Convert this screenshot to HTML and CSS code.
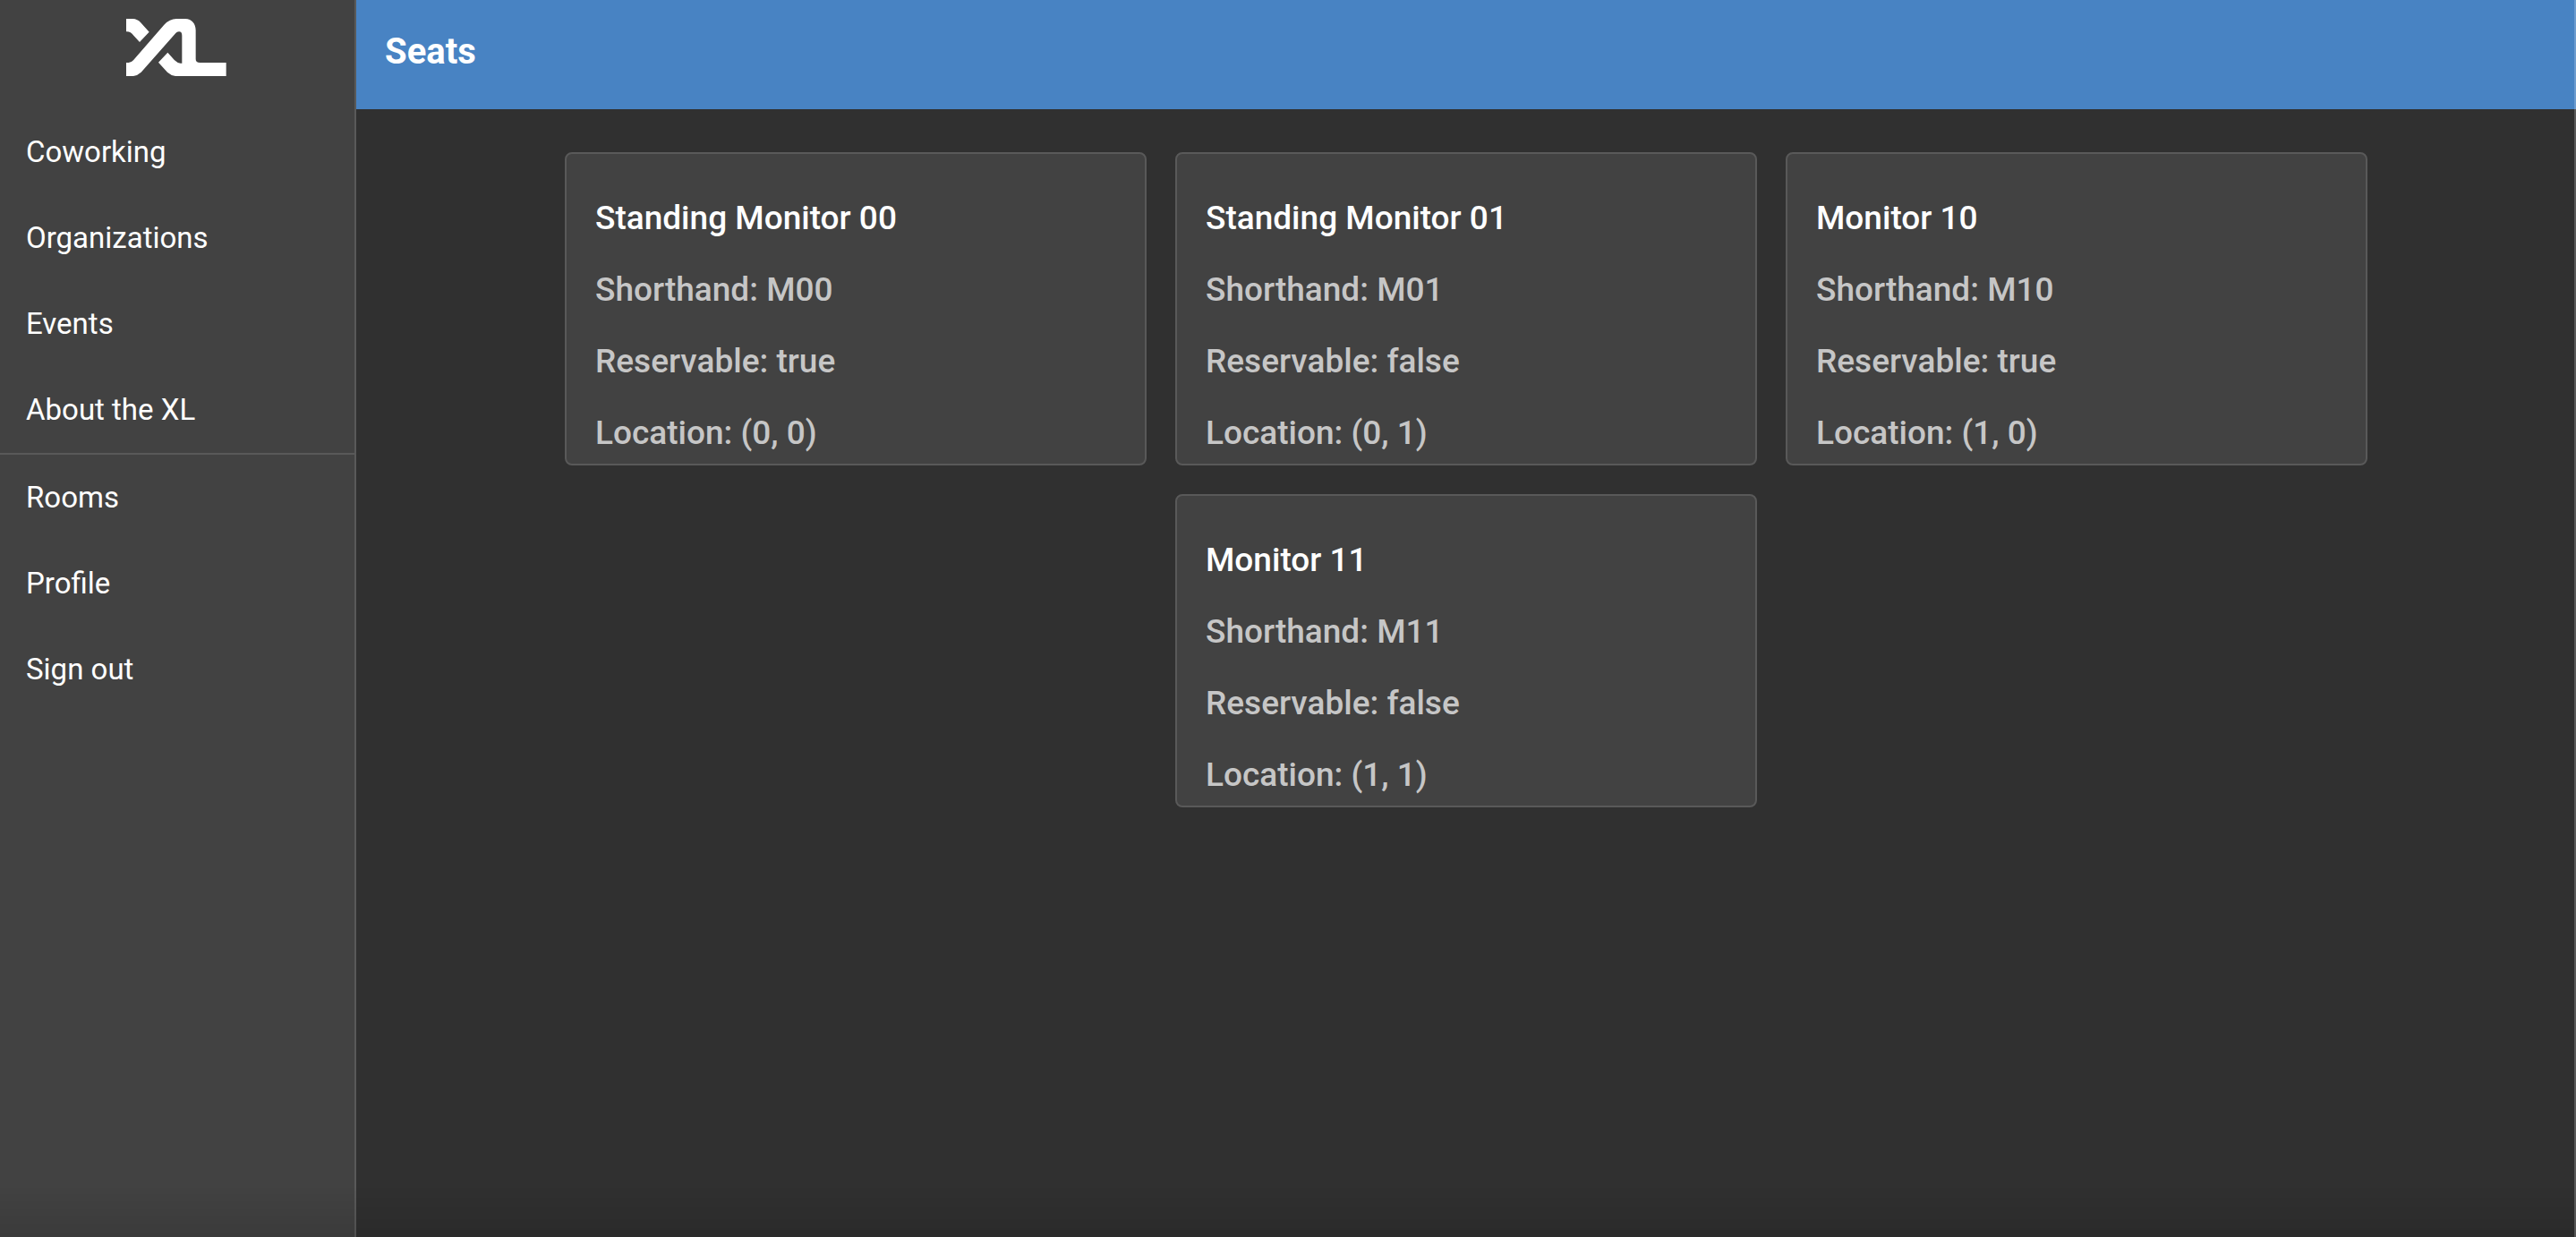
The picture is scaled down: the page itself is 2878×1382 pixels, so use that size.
FILE: index.html
```html
<!DOCTYPE html>
<html lang="en">
<head>
<meta charset="utf-8">
<meta name="viewport" content="width=device-width, initial-scale=1">
<title>Seats</title>
<link rel="stylesheet" href="styles.css">
</head>
<body>
<div class="app">
  <aside class="sidebar">
    <a class="logo" href="#" aria-label="XL home">
      <svg viewBox="0 0 342 192" aria-hidden="true">
        <path d="M0 0H22Q38 1 48 12L77 44L45 78L25 56Q15 43 2 43H0Z"/>
        <path d="M0 192V147H8Q17 147 24 139L127 20Q146 0 168 0H198C220 1 233 16 233 38V135Q233 147 247 147H335V192H165Q150 190 138 179L108 146L139 113L162 139Q172 149 182 149H187V56Q187 43 177 43Q170 43 166 48L50 179Q38 190 24 192Z"/>
      </svg>
    </a>
    <nav class="nav">
      <a class="nav-item" href="#">Coworking</a>
      <a class="nav-item" href="#">Organizations</a>
      <a class="nav-item" href="#">Events</a>
      <a class="nav-item" href="#">About the XL</a>
    </nav>
    <nav class="nav nav-account">
      <a class="nav-item" href="#">Rooms</a>
      <a class="nav-item" href="#">Profile</a>
      <a class="nav-item" href="#">Sign out</a>
    </nav>
  </aside>
  <div class="page">
    <header class="toolbar"><h1 class="toolbar-title">Seats</h1></header>
    <main class="seats">
      <article class="card">
        <h2 class="card-title">Standing Monitor 00</h2>
        <p class="card-line">Shorthand: M00</p>
        <p class="card-line">Reservable: true</p>
        <p class="card-line">Location: (0, 0)</p>
      </article>
      <article class="card">
        <h2 class="card-title">Standing Monitor 01</h2>
        <p class="card-line">Shorthand: M01</p>
        <p class="card-line">Reservable: false</p>
        <p class="card-line">Location: (0, 1)</p>
      </article>
      <article class="card">
        <h2 class="card-title">Monitor 10</h2>
        <p class="card-line">Shorthand: M10</p>
        <p class="card-line">Reservable: true</p>
        <p class="card-line">Location: (1, 0)</p>
      </article>
      <article class="card">
        <h2 class="card-title">Monitor 11</h2>
        <p class="card-line">Shorthand: M11</p>
        <p class="card-line">Reservable: false</p>
        <p class="card-line">Location: (1, 1)</p>
      </article>
    </main>
  </div>
</div>
</body>
</html>
```
FILE: styles.css
```css
* {
  box-sizing: border-box;
}

body {
  margin: 0;
  background: #303030;
  color: #fff;
  font-family: Roboto, "Liberation Sans", sans-serif;
}

.app {
  display: flex;
  min-height: 100vh;
}

/* Window edge and the soft shade along the bottom */
.app::after {
  content: "";
  position: fixed;
  inset: 0;
  border-right: 2px solid rgba(255, 255, 255, 0.2);
  background: linear-gradient(to top, rgba(0, 0, 0, 0.1), transparent 56px);
  pointer-events: none;
}

.sidebar {
  flex: none;
  width: 398px;
  background: #424242;
  border-right: 2px solid #595959;
}

.logo {
  display: flex;
  justify-content: center;
  height: 122px;
  padding-top: 21px;
}

.logo svg {
  width: 114px;
  height: 64px;
  fill: #fff;
}

.nav-account {
  border-top: 2px solid #595959;
}

.nav-item {
  display: block;
  padding: 0 29px;
  color: #fff;
  font-size: 33px;
  line-height: 96px;
  text-decoration: none;
}

.page {
  flex: 1;
  min-width: 0;
}

.toolbar {
  min-height: 122px;
  padding: 32px;
  background: #4883c3;
}

.toolbar-title {
  margin: 0;
  font-size: 40px;
  font-weight: 700;
  line-height: 52px;
}

.seats {
  display: flex;
  flex-wrap: wrap;
  justify-content: center;
  gap: 32px;
  padding: 48px 32px;
}

.card {
  display: flex;
  flex-direction: column;
  gap: 32px;
  flex: 0 1 650px;
  padding: 48px 32px 10px;
  background: #424242;
  border: 2px solid #595959;
  border-radius: 8px;
}

.card-title,
.card-line {
  margin: 0;
  font-size: 37px;
  font-weight: 500;
  line-height: 48px;
}

.card-line {
  color: #c6c6c6;
}
```
